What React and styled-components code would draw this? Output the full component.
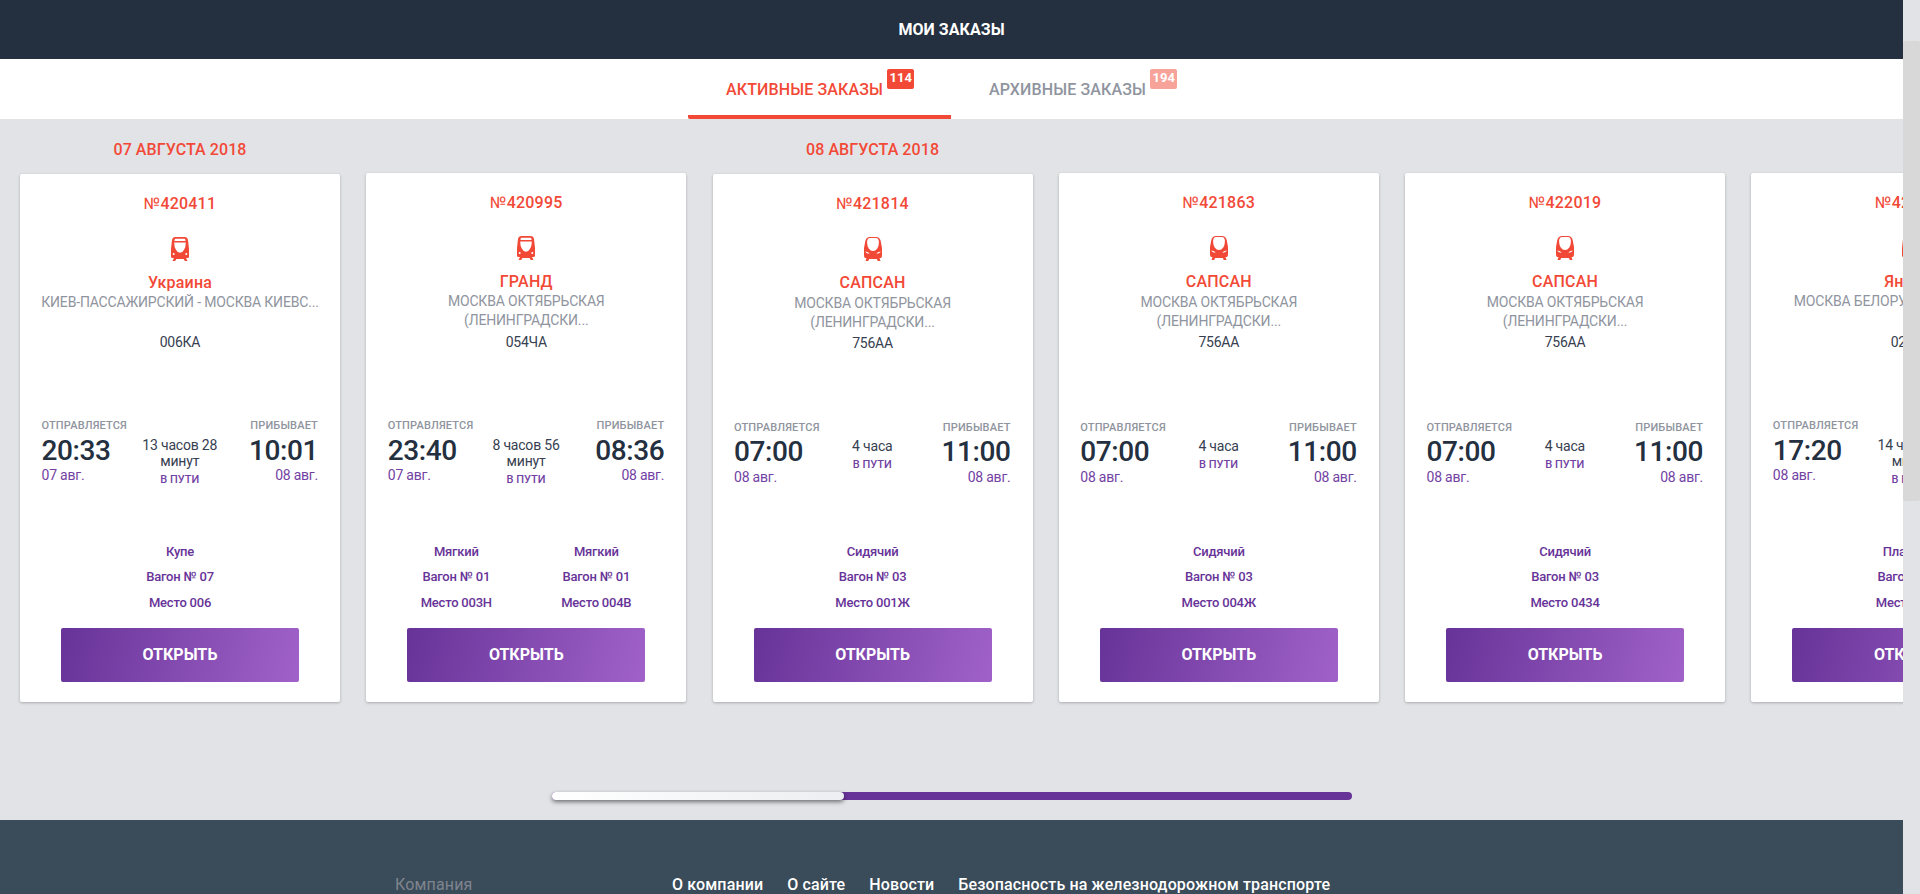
import React from "react";
import styled, { createGlobalStyle } from "styled-components";

const c = {
  navy: "#242f40",
  navySoft: "#364050",
  red: "#f24937",
  grey: "#8f949e",
  page: "#e2e3e7",
  purple: "#673398",
  purpleSoft: "#7241a3",
  footer: "#3a4b59",
};

const GlobalStyle = createGlobalStyle`
  * { box-sizing: border-box; }
  body { margin: 0; font-family: Roboto, "Liberation Sans", sans-serif; background: ${c.page}; overflow: hidden; }
`;

const Screen = styled.div`
  display: flex;
  width: 1920px;
  height: 894px;
  overflow: hidden;
`;

const Page = styled.main`
  width: 1903px;
  height: 894px;
  flex: none;
  overflow: hidden;
  display: flex;
  flex-direction: column;
  background: ${c.page};
`;

const ScrollTrack = styled.div`
  width: 17px;
  padding-top: 41px;
  background: ${c.page};
`;

const ScrollThumb = styled.div`
  height: 460px;
  border-radius: 2px;
  background: #d8d8d8;
`;

const Header = styled.header`
  flex: none;
  height: 59px;
  display: flex;
  align-items: center;
  justify-content: center;
  background: ${c.navy};
  color: #fff;
  font-size: 16px;
  font-weight: 700;
  letter-spacing: 0.05px;
`;

const Tabs = styled.nav`
  flex: none;
  height: 60px;
  display: flex;
  justify-content: center;
  padding-right: 1px;
  background: #fff;
`;

const Tab = styled.div`
  display: flex;
  align-items: flex-start;
  gap: 4px;
  width: 263px;
  padding: 10px 0 0 38px;
  border-bottom: 4px solid ${(p) => (p.$active ? c.red : "transparent")};
  border-bottom-left-radius: 2px;
  color: ${(p) => (p.$active ? c.red : c.grey)};
  white-space: nowrap;
`;

const TabLabel = styled.span`
  min-width: 157px;
  padding-top: 11px;
  font-size: 16px;
  font-weight: 500;
  line-height: 20px;
  letter-spacing: 0.13px;
`;

const Badge = styled.span`
  height: 20px;
  padding: 0 2.5px;
  border-radius: 2px;
  background: ${c.red};
  opacity: ${(p) => (p.$muted ? 0.5 : 1)};
  color: #fff;
  font-size: 13px;
  font-weight: 700;
  line-height: 18px;
`;

const Orders = styled.section`
  flex: none;
  height: 583px;
  padding-left: 20px;
  display: flex;
  gap: 26.27px;
`;

const Column = styled.div`
  flex: none;
  width: 320px;
  display: flex;
  flex-direction: column;
`;

const DateTitle = styled.h2`
  flex: none;
  margin: 0;
  height: ${(p) => p.$height}px;
  padding-top: 21px;
  font-size: 16px;
  font-weight: 500;
  line-height: 20px;
  letter-spacing: 0.08px;
  text-align: center;
  color: ${c.red};
`;

const CardBox = styled.article`
  flex: 1;
  display: flex;
  flex-direction: column;
  align-items: center;
  padding: 18px 21px 20px;
  border-radius: 2px;
  background: #fff;
  box-shadow: 0 1px 3px rgba(0, 0, 0, 0.25);
  text-align: center;
`;

const OrderNumber = styled.div`
  height: 24px;
  font-size: 16px;
  line-height: 24px;
  font-weight: 500;
  letter-spacing: 0.2px;
  color: ${c.red};
`;

const NumberSign = styled.span`
  font-weight: 400;
`;

const TrainSvg = styled.svg`
  flex: none;
  width: 18px;
  height: 24px;
  margin: 21px 0 12px;
  fill: ${c.red};
`;

const TrainName = styled.div`
  height: 19px;
  font-size: 16px;
  line-height: 20px;
  font-weight: 500;
  letter-spacing: 0.2px;
  color: ${c.red};
`;

const Route = styled.div`
  height: ${(p) => p.$height}px;
  padding-top: ${(p) => p.$nudge}px;
  font-size: 14px;
  line-height: 19px;
  letter-spacing: -0.17px;
  white-space: pre;
  color: ${c.grey};
`;

const TrainCode = styled.div`
  height: 18px;
  font-size: 14px;
  line-height: 18px;
  letter-spacing: -0.25px;
  color: ${c.navySoft};
`;

const Schedule = styled.div`
  width: 100%;
  height: ${(p) => p.$height}px;
  margin-top: auto;
  padding: 0 1px 0 0.5px;
  display: flex;
  justify-content: space-between;
`;

const Stop = styled.div`
  width: 90px;
  text-align: ${(p) => (p.$end ? "right" : "left")};
`;

const StopLabel = styled.div`
  font-size: 11px;
  font-weight: 500;
  line-height: 14px;
  letter-spacing: 0.16px;
  color: ${c.grey};
`;

const StopTime = styled.div`
  margin-top: ${(p) => p.$gap}px;
  font-size: 28px;
  line-height: 30px;
  font-weight: 500;
  letter-spacing: -0.4px;
  color: ${c.navy};
`;

const StopDate = styled.div`
  margin-top: ${(p) => p.$gap}px;
  font-size: 14px;
  line-height: 18px;
  letter-spacing: -0.22px;
  color: ${c.purpleSoft};
`;

const Duration = styled.div`
  width: 90px;
  padding-top: ${(p) => p.$top}px;
  font-size: 14px;
  line-height: 16px;
  letter-spacing: -0.2px;
  color: ${c.navySoft};
`;

const OnWay = styled.div`
  padding-top: 3px;
  font-size: 11px;
  font-weight: 500;
  line-height: 16px;
  letter-spacing: 0;
  color: ${c.purpleSoft};
`;

const Tickets = styled.div`
  display: flex;
  height: 89px;
`;

const Ticket = styled.div`
  width: 140px;
  margin-top: -0.5px;
  font-size: 13px;
  font-weight: 500;
  line-height: 25.5px;
  letter-spacing: -0.22px;
  color: ${c.purple};
`;

const OpenButton = styled.button`
  flex: none;
  width: 238px;
  height: 54px;
  padding: 0 0 2px;
  border: 0;
  border-radius: 2px;
  background: linear-gradient(105deg, ${c.purple}, #a062c9);
  color: #fff;
  font: 700 16px Roboto, sans-serif;
`;

const SliderTrack = styled.div`
  flex: none;
  width: 800px;
  height: 8px;
  margin: 90px auto 20px 552px;
  border-radius: 4px;
  background: ${c.purple};
`;

const SliderThumb = styled.div`
  width: 292px;
  height: 8px;
  border-radius: 4px;
  background: linear-gradient(105deg, #fff, #eceef1);
  box-shadow: 0 2px 4px rgba(0, 0, 0, 0.5);
`;

const Footer = styled.footer`
  flex: 1;
  display: flex;
  padding: 55px 0 0 395px;
  background: ${c.footer};
  color: #fff;
  font-size: 16px;
  line-height: 20px;
  white-space: nowrap;
`;

const FooterTitle = styled.div`
  width: 277px;
  letter-spacing: 0.15px;
  color: #7f858f;
`;

const FooterLinks = styled.div`
  display: flex;
  gap: 24px;
  font-weight: 500;
  letter-spacing: 0.14px;
`;

function CoachIcon() {
  return (
    <TrainSvg viewBox="0 0 18 24">
      <path
        fillRule="evenodd"
        d="M4.5 0h9Q16.500 0 17 3l1 9v7.500q0 1.500-1.500 1.500H15l1.500 3h-2.700l-1.200-2H5.400l-1.200 2H1.500L3 21H1.500Q0 21 0 19.500V12L1 3Q1.500 0 4.500 0ZM4.500 1.800Q3.600 2 3.500 3v1h11V3q-.1-1-1-1.200ZM3.300 5.400Q3 9 4.800 12.500 6.500 15.800 9 15.800t4.200-3.300Q15 9 14.700 5.400ZM2.700 16a1 1 0 1 0 0 2a1 1 0 1 0 0-2ZM15.300 16a1 1 0 1 0 0 2a1 1 0 1 0 0-2Z"
      />
    </TrainSvg>
  );
}

function BulletIcon() {
  return (
    <TrainSvg viewBox="0 0 18 24">
      <path
        fillRule="evenodd"
        d="M6 0h6q3.600 0 4.700 4L18 11v7.500q0 1.500-1 2.500h-1.500l1 3h-2.700l-1-2H5.200l-1 2H1.500l1-3H1q-1-1-1-2.500V11L1.300 4Q2.400 0 6 0ZM6 1Q3.600 1 3.200 4 2.700 8 4.700 11.500 6.500 14 9 14t4.300-2.500Q15.300 8 14.800 4 14.400 1 12 1ZM1.300 14.600q.5 1.900 4.400 2.200-1-1.900-4.400-2.200ZM16.700 14.600q-3.400.3-4.400 2.200 3.900-.3 4.400-2.200Z"
      />
    </TrainSvg>
  );
}

const sapsan = {
  name: "САПСАН",
  bullet: true,
  route: "МОСКВА ОКТЯБРЬСКАЯ\n(ЛЕНИНГРАДСКИ...",
  code: "756АА",
  from: ["07:00", "08 авг."],
  to: ["11:00", "08 авг."],
  time: "4 часа",
};

const orders = [
  {
    date: "07 АВГУСТА 2018", id: "420411", name: "Украина", route: "КИЕВ-ПАССАЖИРСКИЙ - МОСКВА КИЕВС...", code: "006КА",
    from: ["20:33", "07 авг."], to: ["10:01", "08 авг."], time: "13 часов 28 минут", tickets: [["Купе", "07", "006"]],
  },
  {
    id: "420995", name: "ГРАНД", route: "МОСКВА ОКТЯБРЬСКАЯ\n(ЛЕНИНГРАДСКИ...", code: "054ЧА",
    from: ["23:40", "07 авг."], to: ["08:36", "08 авг."], time: "8 часов 56 минут", tickets: [["Мягкий", "01", "003Н"], ["Мягкий", "01", "004В"]],
  },
  { ...sapsan, date: "08 АВГУСТА 2018", id: "421814", tickets: [["Сидячий", "03", "001Ж"]] },
  { ...sapsan, id: "421863", tickets: [["Сидячий", "03", "004Ж"]] },
  { ...sapsan, id: "422019", tickets: [["Сидячий", "03", "0434"]] },
  {
    id: "422101", name: "Янтарь", route: "МОСКВА БЕЛОРУССКАЯ - КАЛИНИ...", code: "029ЧА",
    from: ["17:20", "08 авг."], to: ["07:25", "09 авг."], time: "14 часов 5 минут", tickets: [["Плацкарт", "07", "003Н"]],
  },
];

function OrderColumn({ order }) {
  const low = order.bullet;
  return (
    <Column>
      <DateTitle $height={order.date ? 55 : 54}>{order.date}</DateTitle>
      <CardBox>
        <OrderNumber>
          <NumberSign>№</NumberSign>
          {order.id}
        </OrderNumber>
        {order.bullet ? <BulletIcon /> : <CoachIcon />}
        <TrainName>{order.name}</TrainName>
        <Route $height={order.date && !low ? 41 : 42} $nudge={low ? 2 : 1}>{order.route}</Route>
        <TrainCode>{order.code}</TrainCode>
        <Schedule $height={low ? 118 : 120}>
          <Stop>
            <StopLabel>ОТПРАВЛЯЕТСЯ</StopLabel>
            <StopTime $gap={low ? 2 : 3}>{order.from[0]}</StopTime>
            <StopDate $gap={low ? 1 : 0}>{order.from[1]}</StopDate>
          </Stop>
          <Duration $top={low ? 17 : 18}>
            {order.time}
            <OnWay>В ПУТИ</OnWay>
          </Duration>
          <Stop $end>
            <StopLabel>ПРИБЫВАЕТ</StopLabel>
            <StopTime $gap={low ? 2 : 3}>{order.to[0]}</StopTime>
            <StopDate $gap={low ? 1 : 0}>{order.to[1]}</StopDate>
          </Stop>
        </Schedule>
        <Tickets>
          {order.tickets.map(([type, coach, seat]) => (
            <Ticket key={seat}>
              <div>{type}</div>
              <div>Вагон № {coach}</div>
              <div>Место {seat}</div>
            </Ticket>
          ))}
        </Tickets>
        <OpenButton>ОТКРЫТЬ</OpenButton>
      </CardBox>
    </Column>
  );
}

export default function App() {
  return (
    <>
      <GlobalStyle />
      <Screen>
        <Page>
          <Header>МОИ ЗАКАЗЫ</Header>
          <Tabs>
            <Tab $active>
              <TabLabel>АКТИВНЫЕ ЗАКАЗЫ</TabLabel>
              <Badge>114</Badge>
            </Tab>
            <Tab>
              <TabLabel>АРХИВНЫЕ ЗАКАЗЫ</TabLabel>
              <Badge $muted>194</Badge>
            </Tab>
          </Tabs>
          <Orders>
            {orders.map((order) => (
              <OrderColumn key={order.id} order={order} />
            ))}
          </Orders>
          <SliderTrack>
            <SliderThumb />
          </SliderTrack>
          <Footer>
            <FooterTitle>Компания</FooterTitle>
            <FooterLinks>
              <span>О компании</span>
              <span>О сайте</span>
              <span>Новости</span>
              <span>Безопасность на железнодорожном транспорте</span>
            </FooterLinks>
          </Footer>
        </Page>
        <ScrollTrack>
          <ScrollThumb />
        </ScrollTrack>
      </Screen>
    </>
  );
}
